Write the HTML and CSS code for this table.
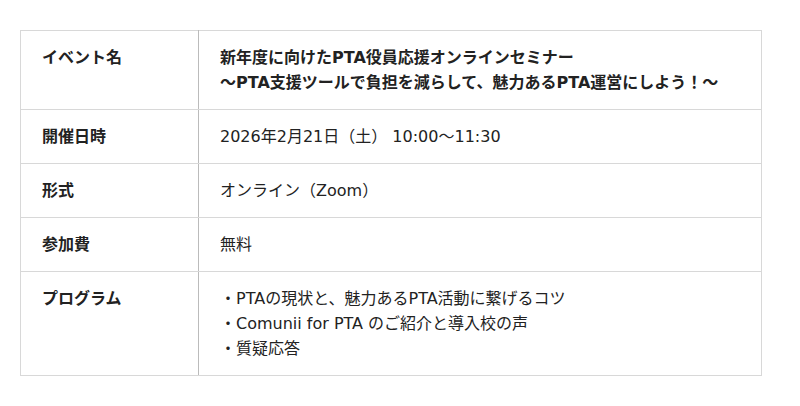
FILE: index.html
```html
<!DOCTYPE html>
<html lang="ja">
<head>
<meta charset="utf-8">
<link rel="stylesheet" href="styles.css">
</head>
<body>
<table class="info">
  <tr>
    <th>イベント名</th>
    <td class="strong">新年度に向けたPTA役員応援オンラインセミナー<br>～PTA支援ツールで負担を減らして、魅力あるPTA運営にしよう！～</td>
  </tr>
  <tr>
    <th>開催日時</th>
    <td>2026年2月21日（土） 10:00～11:30</td>
  </tr>
  <tr>
    <th>形式</th>
    <td>オンライン（Zoom）</td>
  </tr>
  <tr>
    <th>参加費</th>
    <td>無料</td>
  </tr>
  <tr>
    <th>プログラム</th>
    <td>・PTAの現状と、魅力あるPTA活動に繋げるコツ<br>・Comunii for PTA のご紹介と導入校の声<br>・質疑応答</td>
  </tr>
</table>
</body>
</html>
```
FILE: styles.css
```css
html, body {
  margin: 0;
  padding: 0;
  background: #fff;
}
body {
  padding: 30px 20px;
  font-family: "DejaVu Sans", "Noto Sans CJK JP", sans-serif;
  font-size: 16px;
  color: #222;
}
.info {
  width: 742px;
  border-collapse: collapse;
  border: 1px solid #d8d8d8;
}
.info th, .info td {
  border: 1px solid #d8d8d8;
  padding: 14px 21px;
  line-height: 25px;
  text-align: left;
  vertical-align: top;
}
.info th {
  width: 135px;
  font-weight: bold;
  border-right-color: #bbb;
}
.info td.strong {
  font-weight: bold;
}
```
